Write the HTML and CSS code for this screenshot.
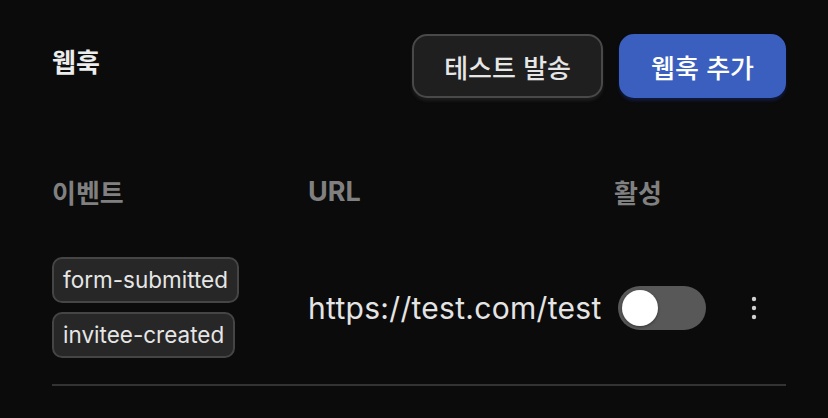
FILE: index.html
```html
<!DOCTYPE html>
<html lang="ko">
<head>
    <meta charset="UTF-8">
    <meta name="viewport" content="width=device-width, initial-scale=1.0">
    <title>웹훅</title>
    <link rel="stylesheet" href="styles.css">
</head>
<body>
    <div class="page">
        <div class="section-header">
            <h2 class="section-title">웹훅</h2>
            <div class="actions">
                <button class="btn btn-outline">테스트 발송</button>
                <button class="btn btn-primary">웹훅 추가</button>
            </div>
        </div>

        <div class="webhook-table">
            <div class="table-head">
                <div class="th">이벤트</div>
                <div class="th th-latin">URL</div>
                <div class="th">활성</div>
                <div class="th"></div>
            </div>

            <div class="table-row">
                <div class="cell events">
                    <span class="tag">form-submitted</span>
                    <span class="tag">invitee-created</span>
                </div>
                <div class="cell url">https://test.com/test</div>
                <div class="cell">
                    <label class="switch">
                        <input type="checkbox">
                        <span class="slider"></span>
                    </label>
                </div>
                <div class="cell more">
                    <button class="more-btn" aria-label="더보기">
                        <svg width="6" height="24" viewBox="0 0 6 24">
                            <circle cx="3" cy="3" r="2.2" fill="#d0d0d0"/>
                            <circle cx="3" cy="12" r="2.2" fill="#d0d0d0"/>
                            <circle cx="3" cy="21" r="2.2" fill="#d0d0d0"/>
                        </svg>
                    </button>
                </div>
            </div>
        </div>
    </div>
</body>
</html>
```

FILE: styles.css
```css
body {
    margin: 0;
    background-color: #0b0b0b;
    color: #e8e8e8;
    font-family: Inter, "Noto Sans CJK KR", sans-serif;
}

.page {
    width: 734px;
    padding: 34px 0 0 52px;
}

.section-header {
    display: flex;
    justify-content: space-between;
    align-items: center;
    height: 64px;
}

.section-title {
    margin: 0 0 10px;
    font-family: "Noto Sans CJK KR", sans-serif;
    font-size: 26px;
    font-weight: 700;
    line-height: 36px;
    color: #ececec;
}

.actions {
    display: flex;
    gap: 16px;
}

.btn {
    height: 64px;
    padding: 0 30px;
    border-radius: 15px;
    border: 2px solid transparent;
    font-family: "Noto Sans CJK KR", sans-serif;
    font-size: 26px;
    font-weight: 500;
    cursor: pointer;
}

.btn-outline {
    background-color: #1f1f1f;
    border-color: #494949;
    color: #e6e6e6;
    box-shadow: 0 3px 3px rgba(40, 40, 40, 0.6);
}

.btn-primary {
    background-color: #3b5fbf;
    border-color: #3b5fbf;
    color: #ffffff;
    box-shadow: 0 3px 3px rgba(20, 35, 90, 0.6);
}

.webhook-table {
    margin-top: 76px;
}

.table-head,
.table-row {
    display: grid;
    grid-template-columns: 256px 306px 108px 64px;
    align-items: center;
}

.th {
    font-family: "Noto Sans CJK KR", sans-serif;
    font-size: 26px;
    font-weight: 700;
    line-height: 36px;
    color: #808080;
}

.th-latin {
    font-family: Inter, sans-serif;
    font-size: 27px;
}

.table-row {
    padding: 47px 0 26px;
    border-bottom: 2px solid #333333;
}

.events {
    display: flex;
    flex-direction: column;
    align-items: flex-start;
    gap: 9px;
}

.tag {
    padding: 5px 9px;
    border: 2px solid #454545;
    border-radius: 10px;
    background-color: #272727;
    font-size: 22.5px;
    line-height: 32px;
    color: #e6e6e6;
}

.url {
    font-size: 30px;
    letter-spacing: 0.3px;
    color: #e4e4e4;
}

.switch {
    position: relative;
    display: block;
    width: 88px;
    height: 44px;
    margin-left: 4px;
}

.switch input {
    display: none;
}

.slider {
    position: absolute;
    inset: 0;
    border-radius: 22px;
    background-color: #585858;
    cursor: pointer;
}

.slider::before {
    content: "";
    position: absolute;
    top: 4px;
    left: 4px;
    width: 36px;
    height: 36px;
    border-radius: 50%;
    background-color: #ffffff;
    box-shadow: 0 1px 3px rgba(0, 0, 0, 0.4);
}

.more {
    display: flex;
    justify-content: center;
}

.more-btn {
    padding: 0;
    border: none;
    background: none;
    display: flex;
    cursor: pointer;
}
```
